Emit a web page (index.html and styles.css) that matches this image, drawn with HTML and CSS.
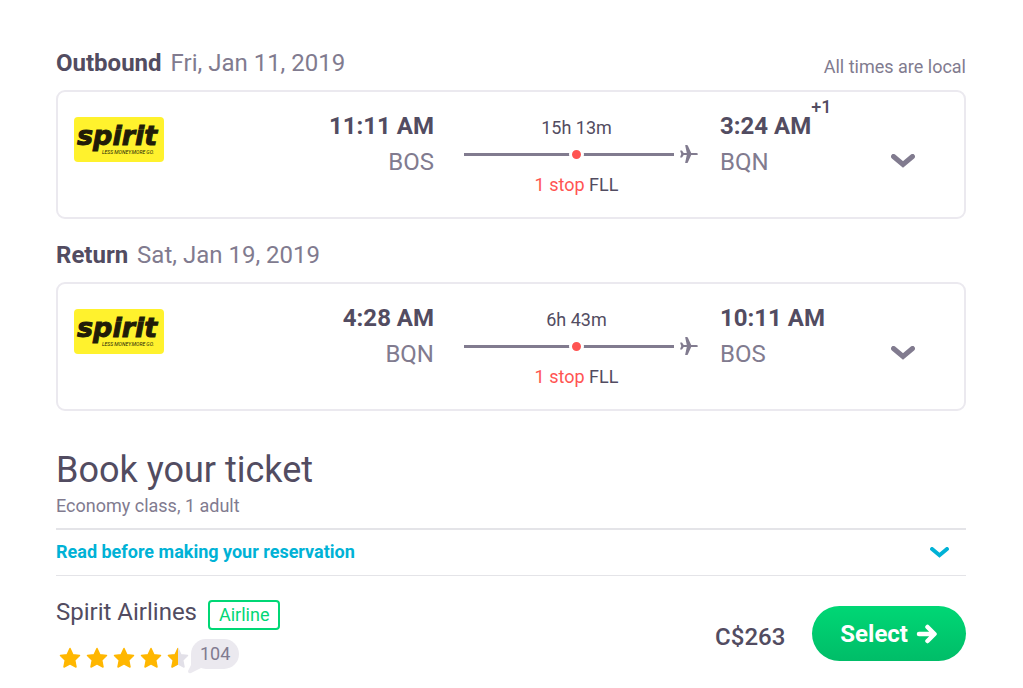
FILE: index.html
```html
<!DOCTYPE html>
<html lang="en">
<head>
<meta charset="utf-8">
<meta name="viewport" content="width=device-width, initial-scale=1">
<title>Flight details</title>
<link rel="stylesheet" href="styles.css">
</head>
<body>
<svg class="sprite" aria-hidden="true">
  <symbol id="plane" viewBox="0 0 18 18"><path d="M11.200 7.900H16.500Q18 8.100 18 9T16.500 10.100H11.200L7.800 17.400Q7.400 18 6.900 18H5.700Q5 18 5.200 17.400L6.800 10.100H3.700L2 12.600H.6Q0 12.600.2 12L1.300 9 .2 6Q0 5.400.6 5.400H2L3.700 7.900H6.800L5.200.6Q5 0 5.700 0H6.900Q7.400 0 7.800.6Z"/></symbol>
  <symbol id="chevron" viewBox="0 0 24 14"><path d="M2.500 2.500 12 10.500 21.500 2.500" fill="none" stroke="currentColor" stroke-width="5" stroke-linecap="round"/></symbol>
  <symbol id="star" viewBox="0 0 22 22"><path d="M11 1.500 13.900 7.700 20.500 8.500 15.700 13.200 17 20 11 16.800 5 20 6.300 13.200 1.500 8.500 8.100 7.700Z" stroke="currentColor" stroke-width="1.500" stroke-linejoin="round"/></symbol>
</svg>
<main class="page">
  <section class="leg">
    <header class="leg-head">
      <h2 class="leg-title">Outbound <span class="leg-date">Fri, Jan 11, 2019</span></h2>
      <p class="note">All times are local</p>
    </header>
    <article class="card">
      <svg class="logo" viewBox="0 0 90 45" role="img" aria-label="Spirit, less money more go">
        <text class="logo-name" x="3" y="28">spirit</text>
        <text class="logo-tag" x="28" y="37">LESS MONEY.MORE GO.</text>
      </svg>
      <div class="stop-end depart"><strong class="time">11:11 AM</strong><span class="code">BOS</span></div>
      <div class="route">
        <span class="duration">15h 13m</span>
        <span class="track"><span class="line"><span class="dot"></span></span><svg class="plane"><use href="#plane"/></svg></span>
        <span class="stops"><span class="stop-count">1 stop</span> FLL</span>
      </div>
      <div class="stop-end arrive"><strong class="time">3:24 AM<span class="plus">+1</span></strong><span class="code">BQN</span></div>
      <button class="toggle" type="button" aria-label="Show outbound details"><svg class="chevron"><use href="#chevron"/></svg></button>
    </article>
  </section>
  <section class="leg">
    <header class="leg-head">
      <h2 class="leg-title">Return <span class="leg-date">Sat, Jan 19, 2019</span></h2>
    </header>
    <article class="card">
      <svg class="logo" viewBox="0 0 90 45" role="img" aria-label="Spirit, less money more go">
        <text class="logo-name" x="3" y="28">spirit</text>
        <text class="logo-tag" x="28" y="37">LESS MONEY.MORE GO.</text>
      </svg>
      <div class="stop-end depart"><strong class="time">4:28 AM</strong><span class="code">BQN</span></div>
      <div class="route">
        <span class="duration">6h 43m</span>
        <span class="track"><span class="line"><span class="dot"></span></span><svg class="plane"><use href="#plane"/></svg></span>
        <span class="stops"><span class="stop-count">1 stop</span> FLL</span>
      </div>
      <div class="stop-end arrive"><strong class="time">10:11 AM</strong><span class="code">BOS</span></div>
      <button class="toggle" type="button" aria-label="Show return details"><svg class="chevron"><use href="#chevron"/></svg></button>
    </article>
  </section>
  <section class="booking">
    <h1 class="booking-title">Book your ticket</h1>
    <p class="booking-sub">Economy class, 1 adult</p>
    <button class="read" type="button">Read before making your reservation<svg class="chevron-small"><use href="#chevron"/></svg></button>
    <div class="offer">
      <div class="seller">
        <div class="seller-head"><h3 class="seller-name">Spirit Airlines</h3><span class="badge">Airline</span></div>
        <div class="rating">
          <span class="stars" role="img" aria-label="4.5 out of 5 stars">
            <svg class="star"><use href="#star"/></svg>
            <svg class="star"><use href="#star"/></svg>
            <svg class="star"><use href="#star"/></svg>
            <svg class="star"><use href="#star"/></svg>
            <span class="star-half"><svg class="star star-empty"><use href="#star"/></svg><svg class="star star-fill"><use href="#star"/></svg></span>
          </span>
          <span class="reviews">104<svg class="tail" viewBox="0 0 14 20"><path d="M3 0 L3 11 L0 17 Q0 20 3 19 L13 14 L8 0 Z"/></svg></span>
        </div>
      </div>
      <strong class="price">C$263</strong>
      <button class="select" type="button">Select<svg class="arrow" viewBox="0 0 22 20"><path d="M3 10H17M11.500 3 18.500 10 11.500 17"/></svg></button>
    </div>
  </section>
</main>
</body>
</html>
```
FILE: styles.css
```css
* { box-sizing: border-box; }
body { margin: 0; background: #fff; color: #524c61; font-family: Roboto, sans-serif; font-size: 18px; line-height: 28px; }
h1, h2, h3, p { margin: 0; font-weight: 400; }
button { font: inherit; border: 0; background: none; padding: 0; cursor: pointer; }
svg { display: block; fill: currentColor; }
.sprite { position: absolute; width: 0; height: 0; }
.page { padding: 45px 57px 16px 56px; }

.leg { margin-bottom: 18px; }
.leg-head { display: flex; justify-content: space-between; align-items: flex-end; margin-bottom: 9px; }
.leg-title { font-size: 24px; line-height: 36px; font-weight: 700; }
.leg-date { margin-left: 3px; font-weight: 400; color: #817b8f; }
.note { color: #817b8f; }
.card { display: grid; grid-template-columns: 90px minmax(0, 1fr) 234px 172px 62px; align-items: start; min-height: 129px; padding: 16px 32px 16px 16px; border: 2px solid #ebe9ef; border-radius: 9px; }

.logo { width: 90px; height: 45px; margin-top: 9px; border-radius: 4px; background: #fff22d; fill: #211c08; }
.logo-name { font: italic 700 27px "DejaVu Sans", sans-serif; stroke: #211c08; stroke-width: 1; }
.logo-tag { font: italic 400 5px Roboto, sans-serif; }
.stop-end { display: flex; flex-direction: column; line-height: 36px; font-size: 24px; }
.depart { padding-right: 30px; text-align: right; }
.arrive { padding-left: 22px; align-items: flex-start; }
.time { position: relative; font-weight: 700; }
.plus { position: absolute; left: 100%; top: -13px; line-height: 24px; font-size: 18px; font-weight: 500; }
.code { color: #817b8f; }
.route { display: flex; flex-direction: column; padding-top: 6px; }
.duration, .stops { width: 225px; text-align: center; line-height: 28px; }
.stops { margin-top: 5px; }
.track { display: flex; align-items: center; gap: 6px; height: 24px; }
.line { display: flex; justify-content: center; align-items: center; flex: 1; height: 3px; padding-left: 14px; background: #817b8f; }
.dot { width: 15px; height: 15px; border: 3px solid #fff; border-radius: 50%; background: #ff5452; }
.plane { width: 18px; height: 18px; color: #817b8f; }
.stop-count { color: #ff5452; }
.toggle { justify-self: end; margin: 46px 17px 0 0; color: #817b8f; }
.chevron { width: 24px; height: 14px; }

.booking { padding-top: 17px; }
.booking-title { font-size: 36px; line-height: 48px; }
.booking-sub { padding-bottom: 10px; color: #817b8f; line-height: 24px; border-bottom: 2px solid #e4e4e8; }
.read { display: flex; justify-content: space-between; align-items: center; width: 100%; padding: 8px 17px 9px 0; border-bottom: 1px solid #e4e4e8; color: #00b2d6; font-weight: 700; }
.chevron-small { width: 19px; height: 11px; }
.offer { display: flex; align-items: flex-start; padding-top: 18px; }
.seller { flex: 1; }
.seller-head { display: flex; align-items: center; gap: 11px; }
.seller-name { font-size: 24px; line-height: 36px; }
.badge { margin-top: 6px; padding: 0 9px; border: 2px solid #00d775; border-radius: 4px; line-height: 26px; color: #00d775; }
.rating { display: flex; align-items: flex-start; gap: 2px; margin-top: 9px; }
.stars { display: flex; gap: 5px; padding: 8px 0 0 3px; }
.star { width: 22px; height: 22px; color: #ffb700; }
.star-half { display: grid; }
.star-half .star { grid-area: 1 / 1; }
.star-half .star-empty { color: #e2e0e8; }
.star-half .star-fill { clip-path: inset(0 50% 0 0); }
.reviews { position: relative; padding: 0 9px; border-radius: 15px; background: #ebe9ef; color: #817b8f; line-height: 30px; }
.tail { position: absolute; left: -3px; top: 15px; width: 14px; height: 20px; z-index: -1; overflow: visible; color: #ebe9ef; }
.price { margin: 25px 27px 0 0; font-size: 24px; line-height: 36px; font-weight: 500; }
.select { display: flex; align-items: center; gap: 8px; margin-top: 12px; padding: 0 28px; height: 55px; border-radius: 28px; background: linear-gradient(#00d775, #00bd68); color: #fff; font-size: 24px; font-weight: 700; }
.arrow { width: 22px; height: 20px; fill: none; stroke: #fff; stroke-width: 4.500; stroke-linecap: round; stroke-linejoin: round; }
```
